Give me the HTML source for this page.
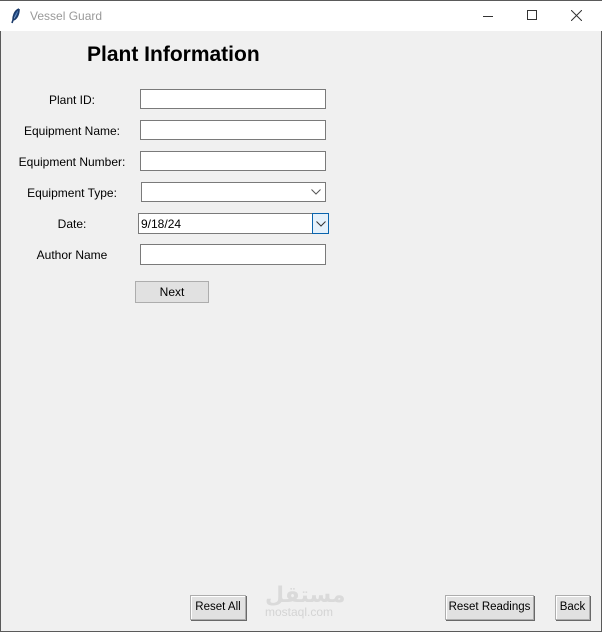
<!DOCTYPE html><html><head><style>
*{margin:0;padding:0;box-sizing:border-box}
body{width:602px;height:632px;overflow:hidden;background:#f0f0f0;font-family:"Liberation Sans",sans-serif;font-size:12px;color:#000;position:relative}
.win{position:absolute;left:0;top:0;width:602px;height:632px;border:1px solid #5a5a5a;border-top:none}
.tb{position:absolute;left:0;top:0;width:602px;height:31px;background:#fff;border-top:1px solid #5a5a5a}
.tt{position:absolute;left:30px;top:8px;color:#999;font-size:12px}
.a{position:absolute}
.lbl{position:absolute;width:140px;text-align:center;left:2px}
.ent{position:absolute;left:140px;width:186px;height:20px;background:#fff;border:1px solid #7a7a7a}
.btn{position:absolute;background:#e1e1e1;border:1px solid #adadad;text-align:center;line-height:22px;box-shadow:inset 1px 1px 0 #fff,1px 1px 0 #696969;font-size:11.5px}
</style></head><body>
<div class="win"></div>
<div class="tb">
<svg class="a" style="left:11px;top:7px" width="10" height="16" viewBox="0 0 10 16"><path d="M8 1 C3 3 2 9 2 12 L1 15 M8 1 C8 6 6 11 2 12" stroke="#1a3a6a" stroke-width="1.6" fill="#2a5a9a"/></svg>
<div class="tt">Vessel Guard</div>
<div class="a" style="left:483px;top:15px;width:10px;height:1px;background:#333"></div>
<div class="a" style="left:527px;top:9px;width:10px;height:10px;border:1px solid #333"></div>
<svg class="a" style="left:571px;top:9px" width="11" height="11"><path d="M0 0L11 11M11 0L0 11" stroke="#333" stroke-width="1"/></svg>
</div>
<div class="a" style="left:87px;top:43px;font-size:21px;font-weight:bold">Plant Information</div>
<div class="lbl" style="top:93px">Plant ID:</div>
<div class="lbl" style="top:124px">Equipment Name:</div>
<div class="lbl" style="top:155px">Equipment Number:</div>
<div class="lbl" style="top:186px">Equipment Type:</div>
<div class="lbl" style="top:217px">Date:</div>
<div class="lbl" style="top:248px">Author Name</div>
<div class="ent" style="top:89px"></div>
<div class="ent" style="top:120px"></div>
<div class="ent" style="top:151px"></div>
<div class="ent" style="top:182px;left:141px;width:185px"><svg class="a" style="right:4px;top:6px" width="10" height="6"><path d="M0.5 0.5L5 5L9.5 0.5" stroke="#555" fill="none"/></svg></div>
<div class="ent" style="top:213px;left:138px;width:191px;height:21px;border-color:#7a7a7a"><span class="a" style="left:2px;top:3px">9/18/24</span><div class="a" style="right:-1px;top:-1px;width:17px;height:21px;border:1px solid #0a64ad;background:#e5f1fb"><svg class="a" style="left:3px;top:7px" width="10" height="6"><path d="M0.5 0.5L5 5L9.5 0.5" stroke="#333" fill="none"/></svg></div></div>
<div class="ent" style="top:244px;height:21px"></div>
<div class="a" style="left:135px;top:281px;width:74px;height:22px;background:#e1e1e1;border:1px solid #adadad;text-align:center;line-height:21px">Next</div>
<div class="btn" style="left:190px;top:595px;width:56px;height:25px">Reset All</div>
<div class="a" style="left:265px;top:583px;color:#dadada;font-size:22px;font-weight:bold;font-family:'DejaVu Sans',sans-serif">مستقل</div>
<div class="a" style="left:265px;top:605px;color:#d4d4d4;font-size:12px">mostaql.com</div>
<div class="btn" style="left:445px;top:595px;width:89px;height:25px">Reset Readings</div>
<div class="btn" style="left:555px;top:595px;width:35px;height:25px">Back</div>
</body></html>
